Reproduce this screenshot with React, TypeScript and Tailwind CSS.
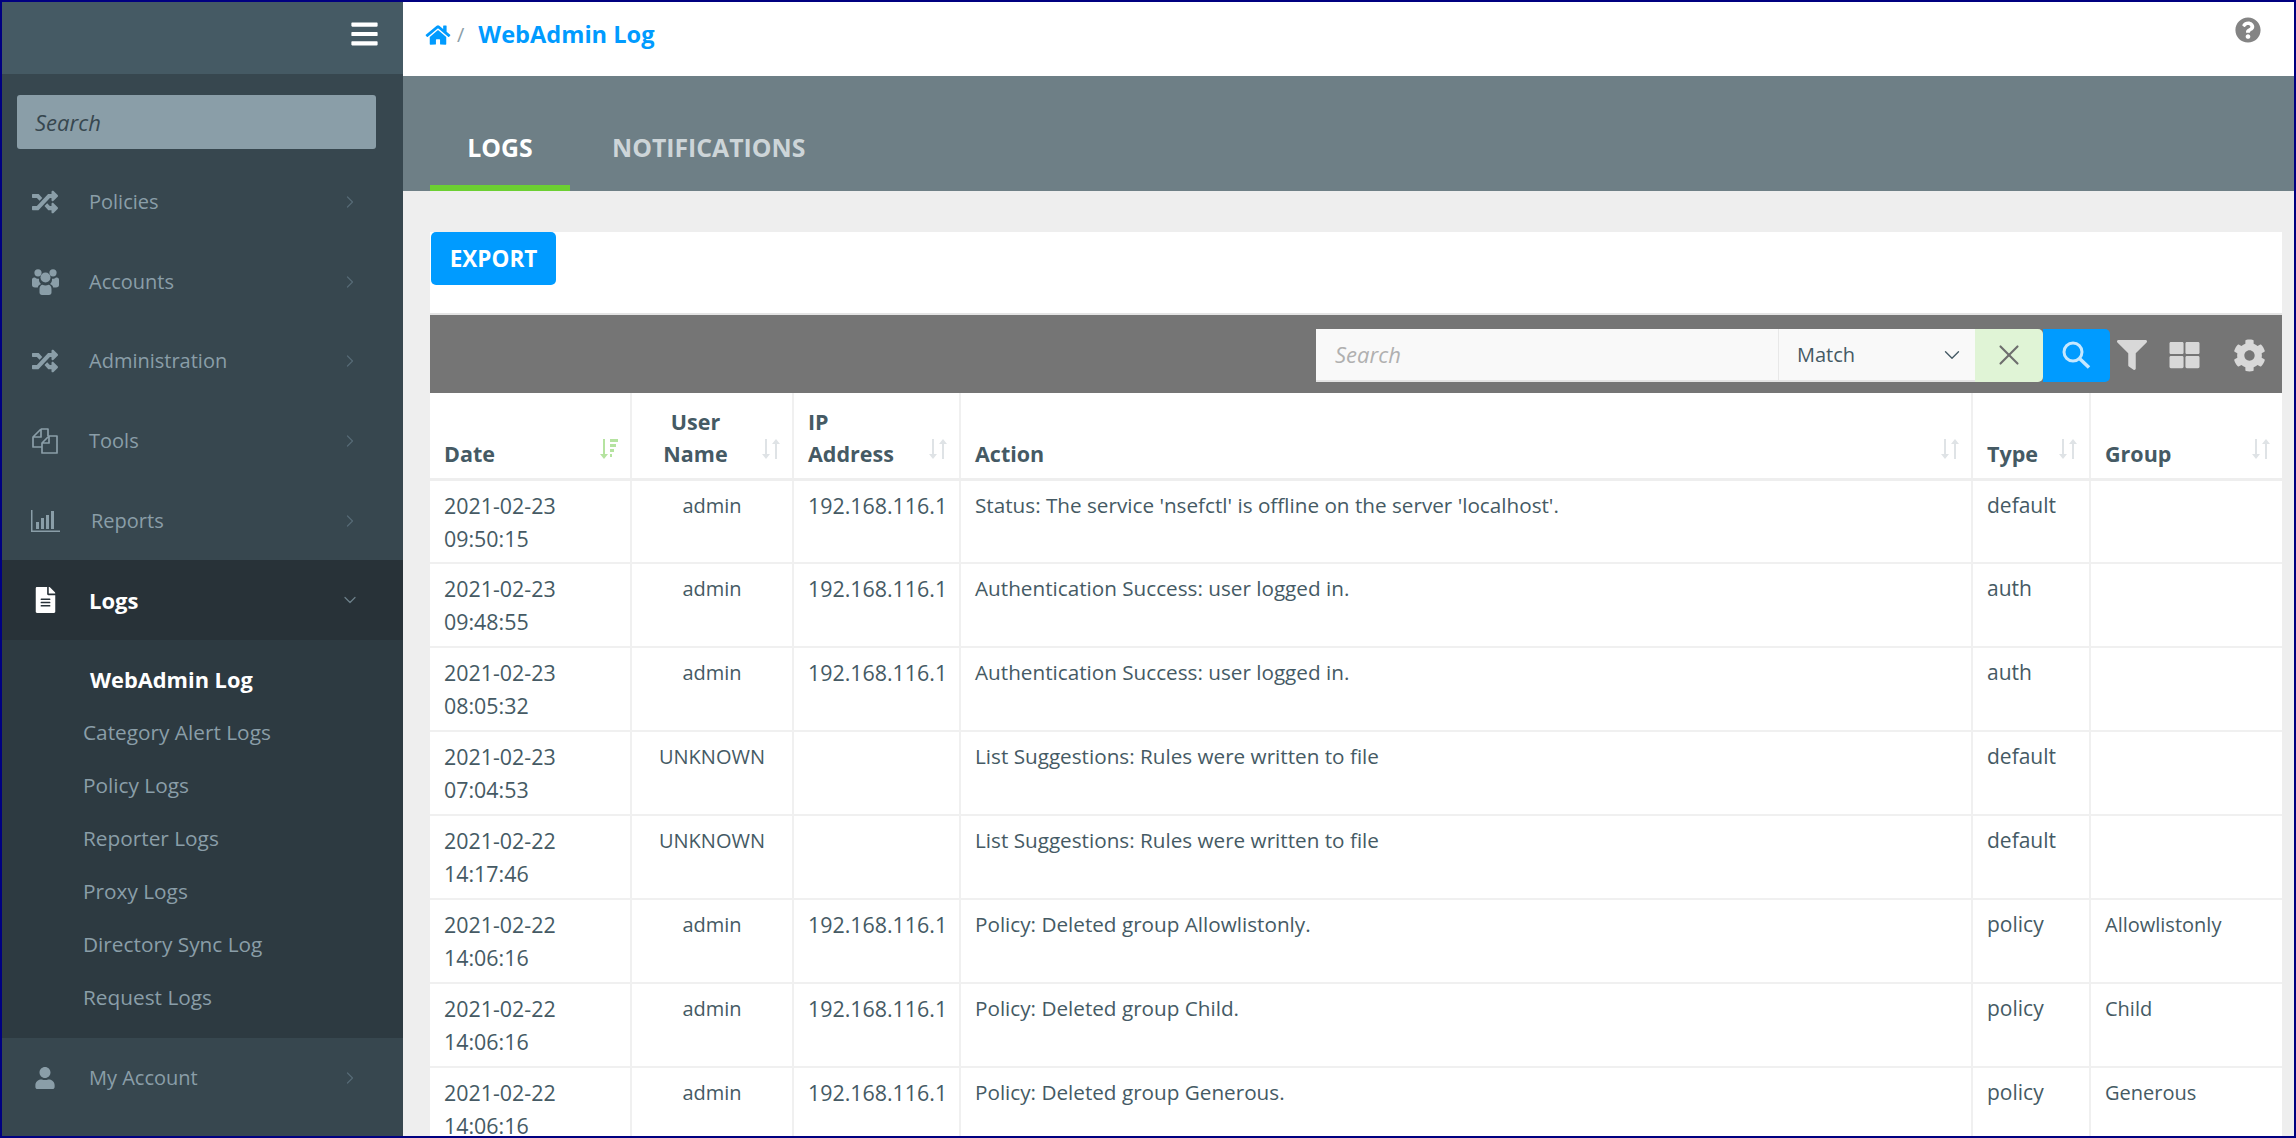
import React from 'react';
import { FaBars, FaCog, FaFileAlt, FaFilter, FaHome, FaQuestionCircle, FaRandom, FaThLarge, FaUser } from 'react-icons/fa';
import { ChevronDown, ChevronRight, X } from 'lucide-react';

const BarChartIcon: React.FC = () => (
    <svg viewBox="0 0 29 22" className="h-[22px] w-[29px]" fill="currentColor">
        <path d="M0 0h1.5v20.5H29V22H0z" />
        <path d="M5 12h3v7H5zM10 8h3v11h-3zM15 5h3v14h-3zM20 1h3v18h-3z" />
    </svg>
);

const FilesIcon: React.FC = () => (
    <svg viewBox="0 0 26 26" className="h-[26px] w-[26px]" fill="none" stroke="currentColor" strokeWidth={1.7} strokeLinejoin="round">
        <path d="M9 1H16V8M9 1L1 9V19H10M9 1V9H1" />
        <path d="M17 8H25V25H10V15ZM17 8V15H10" />
    </svg>
);

const GroupIcon: React.FC = () => (
    <svg viewBox="0 0 27 26" className="h-[26px] w-[27px]" fill="currentColor">
        <circle cx="6" cy="3.8" r="3.6" />
        <circle cx="21" cy="3.8" r="3.6" />
        <circle cx="13.5" cy="8.5" r="5" />
        <path d="M0 10.5C0 9 1.5 8.5 3 8.5c1 1 2.4 1.5 4 1.3-.3 2.3 .6 4 2 5.2-2 .7-3 2-3.2 3.5H3c-2 0-3-1-3-2.5z" />
        <path d="M27 10.5c0-1.500-1.500-2-3-2-1 1-2.400 1.500-4 1.300 .3 2.300-.6 4-2 5.200 2 .7 3 2 3.200 3.500H24c2 0 3-1 3-2.500z" />
        <path d="M7.500 20c0-2.500 1.500-4.200 3-4.200 1.800 1 4.200 1 6 0 1.500 0 3 1.700 3 4.200v3.500c0 1.500-1 2.500-2.500 2.500H10c-1.500 0-2.500-1-2.500-2.500z" />
    </svg>
);

const LensIcon: React.FC = () => (
    <svg viewBox="0 0 29 28" className="h-[28px] w-[29px]" fill="none" stroke="#c5e8ff" strokeWidth={3}>
        <circle cx="11" cy="11" r="9" />
        <path d="M17.500 17.500L27 26.500" strokeWidth={3.500} />
    </svg>
);

const SortIcon: React.FC = () => (
    <svg viewBox="0 0 18 20" className="h-[20px] w-[18px]" fill="#dfe3e6">
        <path d="M3 0h2v15h3l-4 5-4-5h3z" />
        <path d="M13 20h2V5h3l-4-5-4 5h3z" />
    </svg>
);

const SortActiveIcon: React.FC = () => (
    <svg viewBox="0 0 18 20" className="h-[20px] w-[18px]" fill="#b5e3a0">
        <path d="M3 0h2v15h3l-4 5-4-5h3z" />
        <path d="M10 0h8v3h-8zM10 5h6v3h-6zM10 10h4v3h-4zM10 15h2v3h-2z" />
    </svg>
);

const NAV_TOP = [
    { label: 'Policies', icon: <FaRandom className="h-[26px] w-[26px]" /> },
    { label: 'Accounts', icon: <GroupIcon /> },
    { label: 'Administration', icon: <FaRandom className="h-[26px] w-[26px]" /> },
    { label: 'Tools', icon: <FilesIcon /> },
    { label: 'Reports', icon: <BarChartIcon />, shift: true },
];

const SUB_ITEMS = ['Category Alert Logs', 'Policy Logs', 'Reporter Logs', 'Proxy Logs', 'Directory Sync Log', 'Request Logs'];

const ROWS = [
    ['2021-02-23', '09:50:15', 'admin', '192.168.116.1', "Status: The service 'nsefctl' is offline on the server 'localhost'.", 'default', ''],
    ['2021-02-23', '09:48:55', 'admin', '192.168.116.1', 'Authentication Success: user logged in.', 'auth', ''],
    ['2021-02-23', '08:05:32', 'admin', '192.168.116.1', 'Authentication Success: user logged in.', 'auth', ''],
    ['2021-02-23', '07:04:53', 'UNKNOWN', '', 'List Suggestions: Rules were written to file', 'default', ''],
    ['2021-02-22', '14:17:46', 'UNKNOWN', '', 'List Suggestions: Rules were written to file', 'default', ''],
    ['2021-02-22', '14:06:16', 'admin', '192.168.116.1', 'Policy: Deleted group Allowlistonly.', 'policy', 'Allowlistonly'],
    ['2021-02-22', '14:06:16', 'admin', '192.168.116.1', 'Policy: Deleted group Child.', 'policy', 'Child'],
    ['2021-02-22', '14:06:16', 'admin', '192.168.116.1', 'Policy: Deleted group Generous.', 'policy', 'Generous'],
];

const NavItem: React.FC<{ label: string; icon: React.ReactNode; shift?: boolean }> = ({ label, icon, shift }) => (
    <div className="flex h-[79.7px] items-center text-[#8a9ea8]">
        <div className="flex w-[86px] shrink-0 justify-center">{icon}</div>
        <span className={shift ? 'pl-[3px] text-[20px]' : 'pl-[1px] text-[20px]'}>{label}</span>
        <ChevronRight className="ml-auto mr-[43px] h-[20px] w-[20px] text-[#556a75]" strokeWidth={1.5} />
    </div>
);

const Sidebar: React.FC = () => (
    <aside className="flex w-[401px] shrink-0 flex-col bg-[#37474f]">
        <div className="flex h-[72px] shrink-0 items-start justify-end bg-[#455a64] pr-[25px] pt-[17px]">
            <FaBars className="h-[30px] w-[27px] text-white" />
        </div>
        <div className="pl-[15px] pr-[27px] pt-[21px] pb-[13px]">
            <div className="flex h-[54px] items-center rounded-[3px] bg-[#8a9ea8] pl-[18px] text-[22px] italic text-[#37474f]">Search</div>
        </div>
        {NAV_TOP.map((item) => (
            <NavItem key={item.label} {...item} />
        ))}
        <div className="flex h-[80px] shrink-0 items-center bg-[#283238] text-white">
            <div className="flex w-[86px] shrink-0 justify-center">
                <FaFileAlt className="h-[26px] w-[23px]" />
            </div>
            <span className="pl-[1px] text-[22px] font-bold">Logs</span>
            <ChevronDown className="ml-auto mr-[43px] h-[20px] w-[20px] text-[#6b7f89]" strokeWidth={1.5} />
        </div>
        <div className="bg-[#2d3a41] pt-[13px] pb-[14px]">
            <div className="flex h-[53px] items-center pl-[88px] text-[21.8px] font-bold text-white">WebAdmin Log</div>
            {SUB_ITEMS.map((item) => (
                <div key={item} className="flex h-[53px] items-center pl-[81px] text-[20.8px] text-[#8a9ea8]">{item}</div>
            ))}
        </div>
        <NavItem label="My Account" icon={<FaUser className="h-[22px] w-[20px]" />} />
    </aside>
);

const Toolbar: React.FC = () => (
    <div className="flex h-[78px] items-center justify-end bg-[#757575] pr-[16px] pt-[2px]">
        <div className="flex h-[53px] w-[659px] items-center border-b-2 border-[#e4e4e4] bg-[#f9f9f9]">
            <span className="w-[462px] pl-[19px] text-[22px] italic text-[#b0b0b0]">Search</span>
            <div className="flex h-full flex-1 items-center justify-between border-l border-[#e8e8e8] pl-[18px] pr-[10px] pt-[2px] text-[20px] text-[#455a64]">
                Match
                <ChevronDown className="h-[26px] w-[26px]" strokeWidth={1.25} />
            </div>
        </div>
        <div className="flex h-[53px] w-[68px] items-center justify-center rounded-r-[5px] bg-[#e0f4d6]">
            <X className="h-[34px] w-[34px] text-[#6e6e6e]" strokeWidth={1.5} />
        </div>
        <div className="flex h-[53px] w-[67px] items-center justify-center rounded-r-[5px] bg-[#009bff]">
            <LensIcon />
        </div>
        <FaFilter className="ml-[6px] h-[30px] w-[32px] text-[#d8d8d8]" />
        <FaThLarge className="ml-[18px] h-[30px] w-[37px] text-[#d8d8d8]" />
        <FaCog className="ml-[30px] h-[33px] w-[33px] text-[#d8d8d8]" />
    </div>
);

const HEADERS: { label: React.ReactNode; center?: boolean; active?: boolean }[] = [
    { label: 'Date', active: true },
    { label: <>User<br />Name</>, center: true },
    { label: <>IP<br />Address</> },
    { label: 'Action' },
    { label: 'Type' },
    { label: 'Group' },
];

const LogTable: React.FC = () => (
    <table className="w-full table-fixed border-collapse text-[20px] leading-[33px] text-[#455a64]">
        <colgroup>
            <col className="w-[201px]" />
            <col className="w-[162px]" />
            <col className="w-[167px]" />
            <col className="w-[1012px]" />
            <col className="w-[118px]" />
            <col />
        </colgroup>
        <thead>
            <tr className="h-[86px] border-b-[3px] border-[#eeeeee]">
                {HEADERS.map((header, i) => (
                    <th key={i} className="relative border-r-2 border-[#f0f0f0] px-[14px] pb-[8px] align-bottom text-[21.5px] leading-[32px] font-bold last:border-r-0">
                        <div className={header.center ? 'pr-[33px] text-center' : 'text-left'}>{header.label}</div>
                        <div className="absolute right-[12px] bottom-[19px]">
                            {header.active ? <SortActiveIcon /> : <SortIcon />}
                        </div>
                    </th>
                ))}
            </tr>
        </thead>
        <tbody>
            {ROWS.map((row, i) => (
                <tr key={i} className="h-[84px] border-b-2 border-[#f0f0f0]">
                    <td className="border-r-2 border-[#f0f0f0] px-[14px] pt-[8px] align-top text-[21.4px]">{row[0]}<br />{row[1]}</td>
                    <td className="border-r-2 border-[#f0f0f0] px-[14px] pt-[8px] text-center align-top">{row[2]}</td>
                    <td className="border-r-2 border-[#f0f0f0] px-[14px] pt-[8px] align-top text-[21.4px]">{row[3]}</td>
                    <td className="border-r-2 border-[#f0f0f0] px-[14px] pt-[8px] align-top text-[20.7px]">{row[4]}</td>
                    <td className="border-r-2 border-[#f0f0f0] px-[14px] pt-[8px] align-top text-[21px]">{row[5]}</td>
                    <td className="px-[14px] pt-[8px] align-top">{row[6]}</td>
                </tr>
            ))}
        </tbody>
    </table>
);

const App: React.FC = () => (
    <div className="flex h-screen overflow-hidden border-2 border-[#000080] bg-[#eeeeee] font-['Open_Sans',sans-serif]">
        <Sidebar />
        <main className="flex min-w-0 flex-1 flex-col overflow-hidden">
            <header className="flex h-[74px] shrink-0 items-start justify-between bg-white pl-[22px] pr-[33px] pt-[15px] shadow-[0_1px_2px_rgba(0,0,0,0.4)]">
                <div className="flex items-center">
                    <FaHome className="h-[22px] w-[26px] text-[#009bff]" />
                    <span className="ml-[6px] text-[20px] text-[#8a9ea8]">/</span>
                    <span className="ml-[14px] text-[23.6px] font-bold text-[#009bff]">WebAdmin Log</span>
                </div>
                <FaQuestionCircle className="h-[26px] w-[26px] text-[#848484]" />
            </header>
            <nav className="flex h-[115px] shrink-0 items-end bg-[#6e7f86] pl-[27px]">
                <div className="flex h-[80px] w-[140px] items-center justify-center border-b-[6px] border-[#6ccf32] text-[24.8px] font-bold text-white">LOGS</div>
                <div className="flex h-[80px] items-center pb-[6px] pl-[42px] text-[24.8px] font-bold text-[#cdd5d8]">NOTIFICATIONS</div>
            </nav>
            <div className="pl-[27px] pr-[12px] pt-[41px]">
                <section className="bg-white">
                    <div className="border-b-2 border-[#e4e4e4] pb-[28px]">
                        <button className="ml-[1px] flex h-[53px] w-[125px] items-center justify-center rounded-[5px] bg-[#009bff] text-[22.5px] font-bold text-white">EXPORT</button>
                    </div>
                    <Toolbar />
                    <LogTable />
                </section>
            </div>
        </main>
    </div>
);

export default App;
